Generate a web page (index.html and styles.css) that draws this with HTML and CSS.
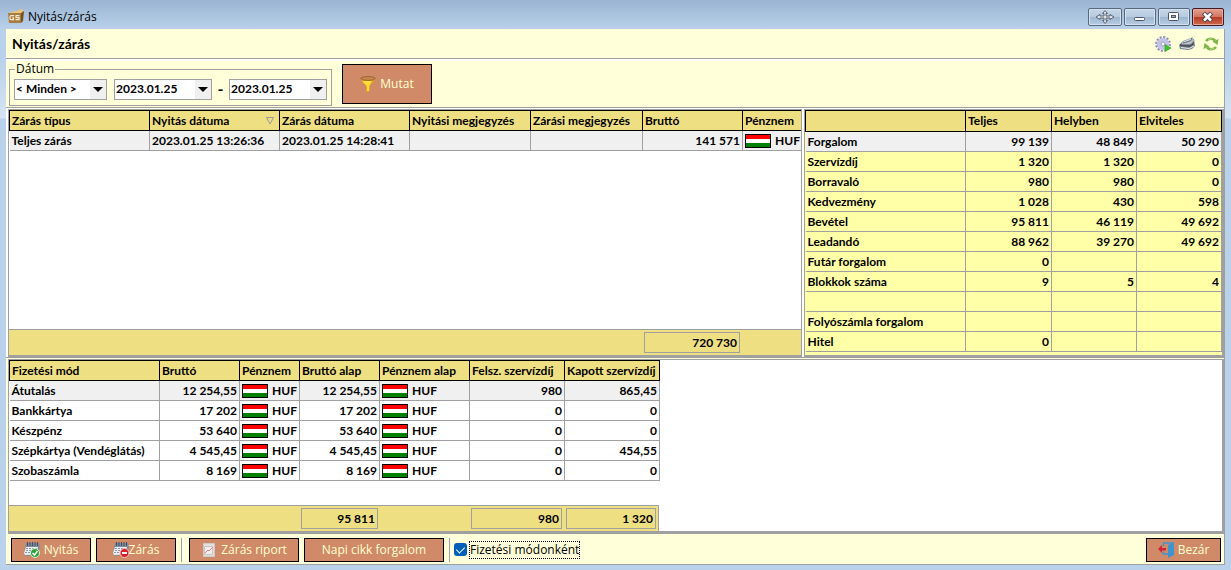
FILE: index.html
```html
<!DOCTYPE html>
<html lang="hu">
<head>
<meta charset="utf-8">
<title>Nyitás/zárás</title>
<link rel="stylesheet" href="styles.css">
</head>
<body>
<svg class="defs" width="0" height="0" aria-hidden="true">
  <symbol id="flag" viewBox="0 0 26 14"><path fill="#000" d="M0 0h26v14H0z"/><path fill="#f00" d="M1 1h24v4H1z"/><path fill="#fff" d="M1 5h24v4H1z"/><path fill="#008000" d="M1 9h24v4H1z"/></symbol>
  <symbol id="calendar" viewBox="0 0 16 16"><path fill="#7f8b9b" d="M2 1h13l1 4-3 8-11 1-2-3z"/><path fill="#eceff4" d="M2 5h12l-2 7.500-11 .5-1-2z"/><path stroke="#3f4f66" stroke-width="1" d="M3.500 0v4M6 0v4M8.500 0v4M11 0v4M13.500 0v4"/><path stroke="#8797ad" stroke-width="1.200" stroke-dasharray="2 1" d="M2 6.500h11M2 8.500h10M1 10.500h10"/></symbol>
</svg>
<div class="window">
  <header class="titlebar">
    <svg class="appicon" viewBox="0 0 16 16"><path fill="#eec477" d="M1 4 15 0v4z"/><path fill="#a97b3e" d="M0 4h13v10H1z"/><path fill="#76501f" d="M13 4l3-2-1 10-2 2z"/><path fill="none" stroke="#f7ead0" stroke-width="1.200" d="M6 6.600H3a1 1 0 0 0-1 1v2a1 1 0 0 0 1 1h2.500V8.800H4.200M11.500 6.600H8v2h3v2H7.500"/></svg>
    <span class="caption">Nyitás/zárás</span>
    <button class="wbtn wide" aria-label="Mozgatás"><svg viewBox="0 0 20 14"><path fill="#dde3ea" stroke="#5c6570" stroke-width="1" d="M10 .5l2.500 3H11V6h4V4.500L19 7l-4 2.500V8h-4v2.500h1.500l-2.500 3-2.500-3H9V8H5v1.500L1 7l4-2.500V6h4V3.500H7.500z"/></svg></button>
    <button class="wbtn" aria-label="Kis méret"><svg viewBox="0 0 20 14"><rect x="4.500" y="7.500" width="10" height="3" rx="1" fill="#fff" stroke="#4d5662"/></svg></button>
    <button class="wbtn" aria-label="Teljes méret"><svg viewBox="0 0 20 14"><rect x="4.500" y="2.500" width="10" height="8" rx="1" fill="#fff" stroke="#4d5662"/><rect x="7.500" y="5.500" width="4" height="2" fill="#9ab" stroke="#4d5662"/></svg></button>
    <button class="wbtn close" aria-label="Bezárás"><svg viewBox="0 0 20 14"><path stroke="#4b4350" stroke-width="4.500" d="M5.500 3l8 8M13.500 3l-8 8"/><path stroke="#fff" stroke-width="2.500" d="M6 3.500l7 7M13 3.500l-7 7"/></svg></button>
  </header>
  <main class="client">
    <div class="heading">
      <h1>Nyitás/zárás</h1>
      <svg viewBox="0 0 16 16"><circle cx="8" cy="8" r="6.700" fill="none" stroke="#8f8fc0" stroke-width="2.400" stroke-dasharray="2.100 1.400"/><circle cx="8" cy="8" r="4" fill="none" stroke="#c3c3e6" stroke-width="4.200"/><circle cx="8" cy="8" r="1.900" fill="#fffff0" stroke="#8888b4" stroke-width=".8"/><path fill="#3cc521" stroke="#2a9a18" stroke-width=".5" d="M10 8.500l6 3.500-6 3.500z"/></svg>
      <svg viewBox="0 0 16 16"><path fill="#7e868e" d="M0 9l4-4 8-3 3 1 1 7-3 3-4 1-8-1z"/><path fill="#b9c2ca" d="M3 6l9-4 3 2-3 4-9 .5z"/><path fill="#474d55" d="M1 8.500l10 .8 4-3v1.600l-4 3-10-.8z"/><path fill="none" stroke="#e4ebf0" stroke-width="1" d="M2 11.500l8 1 5-2.500M5 6l7-2.500"/><path fill="none" stroke="#4c5864" stroke-width=".8" d="M4 7l8-2.500 1-3"/></svg>
      <svg viewBox="0 0 16 16"><path fill="none" stroke="#7fb548" stroke-width="2.600" d="M3 5a6 6 0 0 1 9-.500M13 11a6 6 0 0 1-9 .5"/><path fill="#7fb548" d="M15.500 3l-1 6-5-3.500zM.5 13l1-6 5 3.500z"/><path stroke="#c0dc94" d="M5 3.500l4-1M7 13.500l4-1"/></svg>
    </div>
    <form class="filters">
      <fieldset>
        <legend>Dátum</legend>
        <span class="combo range"><select aria-label="Időszak"><option>&lt; Minden &gt;</option></select></span>
        <span class="combo"><select aria-label="Kezdő dátum"><option>2023.01.25</option></select></span>
        <span class="dash">-</span>
        <span class="combo"><select aria-label="Záró dátum"><option>2023.01.25</option></select></span>
      </fieldset>
      <button type="button" class="btn show"><svg viewBox="0 0 16 16"><path fill="#dfa81a" d="M0 3h16l-6 7v5l-4 1v-6z"/><path fill="#ffdc3c" d="M2 5h10l-3 5v5H7v-5z"/><ellipse cx="8" cy="2.500" rx="7.400" ry="1.900" fill="#c98452" stroke="#96692c"/></svg>Mutat</button>
    </form>
    <div class="upper">
      <section class="pane closings">
        <table class="grid">
          <colgroup><col class="c-type"><col class="c-date"><col class="c-date2"><col class="c-note"><col class="c-note2"><col class="c-sum"><col class="c-cur"></colgroup>
          <thead><tr><th>Zárás típus</th><th><span class="sorted">Nyitás dátuma<svg viewBox="0 0 8 8"><path fill="none" stroke="#999" d="M.5 .5h7l-3.500 6.500z"/></svg></span></th><th>Zárás dátuma</th><th>Nyitási megjegyzés</th><th>Zárási megjegyzés</th><th>Bruttó</th><th>Pénznem</th></tr></thead>
          <tbody><tr class="selected"><td>Teljes zárás</td><td>2023.01.25 13:26:36</td><td>2023.01.25 14:28:41</td><td></td><td></td><td class="num">141 571</td><td class="cur"><svg><use href="#flag"/></svg>HUF</td></tr></tbody>
        </table>
        <div class="totals upper-totals"><output>720 730</output></div>
      </section>
      <section class="pane summary">
        <table class="grid">
          <colgroup><col><col class="s-all"><col class="s-part"><col class="s-part"></colgroup>
          <thead><tr><th></th><th>Teljes</th><th>Helyben</th><th>Elviteles</th></tr></thead>
          <tbody>
            <tr class="selected"><td>Forgalom</td><td>99 139</td><td>48 849</td><td>50 290</td></tr>
            <tr><td>Szervízdíj</td><td>1 320</td><td>1 320</td><td>0</td></tr>
            <tr><td>Borravaló</td><td>980</td><td>980</td><td>0</td></tr>
            <tr><td>Kedvezmény</td><td>1 028</td><td>430</td><td>598</td></tr>
            <tr><td>Bevétel</td><td>95 811</td><td>46 119</td><td>49 692</td></tr>
            <tr><td>Leadandó</td><td>88 962</td><td>39 270</td><td>49 692</td></tr>
            <tr><td>Futár forgalom</td><td>0</td><td></td><td></td></tr>
            <tr><td>Blokkok száma</td><td>9</td><td>5</td><td>4</td></tr>
            <tr><td></td><td></td><td></td><td></td></tr>
            <tr><td>Folyószámla forgalom</td><td></td><td></td><td></td></tr>
            <tr><td>Hitel</td><td>0</td><td></td><td></td></tr>
          </tbody>
        </table>
      </section>
    </div>
    <section class="lower">
      <div class="payments">
        <table class="grid">
          <colgroup><col class="p-name"><col class="p-sum"><col class="p-cur"><col class="p-sum"><col class="p-curb"><col class="p-fee"><col class="p-fee"></colgroup>
          <thead><tr><th>Fizetési mód</th><th>Bruttó</th><th>Pénznem</th><th>Bruttó alap</th><th>Pénznem alap</th><th>Felsz. szervízdíj</th><th>Kapott szervízdíj</th></tr></thead>
          <tbody>
            <tr class="selected"><td>Átutalás</td><td class="num">12 254,55</td><td class="cur"><svg><use href="#flag"/></svg>HUF</td><td class="num">12 254,55</td><td class="cur"><svg><use href="#flag"/></svg>HUF</td><td class="num">980</td><td class="num">865,45</td></tr>
            <tr><td>Bankkártya</td><td class="num">17 202</td><td class="cur"><svg><use href="#flag"/></svg>HUF</td><td class="num">17 202</td><td class="cur"><svg><use href="#flag"/></svg>HUF</td><td class="num">0</td><td class="num">0</td></tr>
            <tr><td>Készpénz</td><td class="num">53 640</td><td class="cur"><svg><use href="#flag"/></svg>HUF</td><td class="num">53 640</td><td class="cur"><svg><use href="#flag"/></svg>HUF</td><td class="num">0</td><td class="num">0</td></tr>
            <tr><td>Szépkártya (Vendéglátás)</td><td class="num">4 545,45</td><td class="cur"><svg><use href="#flag"/></svg>HUF</td><td class="num">4 545,45</td><td class="cur"><svg><use href="#flag"/></svg>HUF</td><td class="num">0</td><td class="num">454,55</td></tr>
            <tr><td>Szobaszámla</td><td class="num">8 169</td><td class="cur"><svg><use href="#flag"/></svg>HUF</td><td class="num">8 169</td><td class="cur"><svg><use href="#flag"/></svg>HUF</td><td class="num">0</td><td class="num">0</td></tr>
          </tbody>
        </table>
        <div class="totals lower-totals"><output class="t-base">95 811</output><output class="t-fee">980</output><output class="t-fee2">1 320</output></div>
      </div>
    </section>
    <footer class="actions">
      <button class="btn b-open"><svg viewBox="0 0 16 16"><use href="#calendar"/><circle cx="11" cy="11" r="4.500" fill="#2fa33a" stroke="#d8f0d8"/><path fill="none" stroke="#fff" stroke-width="1.500" d="M8.500 11l2 2 3-4"/></svg>Nyitás</button>
      <button class="btn b-close"><svg viewBox="0 0 16 16"><use href="#calendar"/><circle cx="11.500" cy="11" r="4.500" fill="#d8202a" stroke="#f4c4c4"/><path stroke="#fff" stroke-width="2" d="M9 11h5"/></svg>Zárás</button>
      <span class="sep"></span>
      <button class="btn b-report"><svg viewBox="0 0 16 16"><path fill="#e3e1e0" stroke="#cfcac8" d="M2.500 1.500h11v13h-11z"/><path fill="#f1efee" stroke="#c9c4c2" d="M3.500 4.500h8v8h-8z"/><path fill="none" stroke="#e08080" d="M4 11l3-3 1 1 4-4"/></svg>Zárás riport</button>
      <button class="btn b-daily">Napi cikk forgalom</button>
      <span class="sep"></span>
      <label class="check"><input type="checkbox" checked><span>Fizetési módonként</span></label>
      <button class="btn b-exit"><svg viewBox="0 0 16 16"><path fill="none" stroke="#3f94cf" stroke-width="1.500" d="M5.500 4V1H15v11H5.500V9.500"/><path fill="#3f94cf" d="M10 3l6-3v13l-6 3z"/><path fill="#d0263c" d="M0 7l4-4v3h4v2.500H4V11z"/></svg>Bezár</button>
    </footer>
  </main>
</div>
</body>
</html>
```

FILE: styles.css
```css
* { box-sizing: border-box; }
html, body { height: 100%; }
body { margin: 0; font: 12px/16px "Open Sans", "Noto Sans", sans-serif; color: #000; }
.defs { position: absolute; }
button, select, input { font: inherit; }
.window {
  min-height: 100%; display: flex; flex-direction: column; padding: 0 6px 5px;
  background: linear-gradient(#9ab4d1, #b9d1ea 29px, #b9d1ea 60px, #d5e4f3 118px, #b9d1ea 119px);
}
.titlebar { display: flex; align-items: center; gap: 2px; height: 29px; padding: 5px 1px 0 2px; }
.titlebar .appicon { width: 16px; height: 16px; margin-right: 2px; }
.caption { flex: 1; }
.wbtn { width: 32px; height: 18px; padding: 0; border: 1px solid #57697f; border-radius: 2px; background: linear-gradient(#c5d6e8, #b6cadf 50%, #9db6d0 50%, #b7cde3); box-shadow: inset 0 0 0 1px #d4e2f0; display: flex; align-items: center; justify-content: center; }
.wbtn.wide { width: 34px; }
.wbtn svg { width: 20px; height: 14px; }
.wbtn.close { border-color: #43192a; background: linear-gradient(#e3a18f, #cf7460 50%, #b43a25 50%, #cd6a4c); box-shadow: inset 0 0 0 1px #e7a795; }
.client { flex: 1; display: flex; flex-direction: column; background: #ffffd9; border-right: 1px solid #a0a0a0; border-bottom: 1px solid #a0a0a0; }
.heading { display: flex; align-items: center; gap: 8px; height: 30px; padding: 0 5px 0 6px; border-bottom: 1px solid #a0a0a0; }
.heading h1 { flex: 1; margin: 0; font: bold 14px/16px Lato, sans-serif; }
.heading svg { width: 16px; height: 16px; }
.filters { display: flex; gap: 10px; height: 49px; padding: 3px 3px 2px; border-top: 2px solid #fff; border-bottom: 1px solid #a0a0a0; }
fieldset { display: flex; align-items: center; margin: 0; padding: 0 4px 1px; width: 323px; border: 1px solid #a0a0a0; min-width: 0; height: 42px; }
legend { padding: 0 1px; margin-left: 1px; line-height: 10px; }
.combo { position: relative; width: 98px; height: 21px; }
.combo.range { width: 93px; margin-right: 7px; }
.combo::after { content: ""; position: absolute; right: 4px; top: 8px; border: 5px solid transparent; border-top-color: #000; border-bottom: 0; pointer-events: none; }
.combo select { appearance: none; width: 100%; height: 21px; padding: 0 0 1px 1px; border: 1px solid #a0a0a0; border-radius: 0; background: linear-gradient(#f0f0f0, #f0f0f0) right / 16px 100% no-repeat #fff; font: bold 12px/16px Lato, sans-serif; color: #000; }
.dash { width: 17px; text-align: center; font: bold 16px/16px Lato, sans-serif; }
.btn { display: flex; align-items: center; justify-content: center; gap: 4px; padding: 0; border: 1px solid #000; background: #d08a68; color: #ffffd0; }
.btn svg { width: 16px; height: 16px; }
.show { width: 90px; height: 40px; }
.upper { display: grid; grid-template-columns: 794px 1fr; gap: 2px; height: 250px; padding: 1px 0 0 2px; background: #fff; border-bottom: 1px solid #a0a0a0; }
.pane { display: flex; flex-direction: column; border: 1px solid #a0a0a0; border-bottom-width: 2px; background: #fff; overflow: hidden; }
.grid { border-collapse: collapse; table-layout: fixed; font: bold 12px/16px Lato, sans-serif; }
.grid th, .grid td { height: 20px; padding: 0 2px; border: 1px solid #a0a0a0; text-align: left; white-space: nowrap; overflow: hidden; }
.grid th { border-color: #000; background: #eedf82; }
.grid td:first-child { border-left: 0; }
.grid .selected td { background: #f0f0f0; border-top-color: #000; }
.grid .num, .summary td + td { text-align: right; }
.grid .cur { padding-right: 0; }
.cur svg { width: 26px; height: 14px; margin-right: 4px; vertical-align: -3px; }
.closings .grid { width: 793px; }
.c-type { width: 140px; } .c-date, .c-date2 { width: 130px; } .c-note { width: 121px; } .c-note2 { width: 112px; } .c-sum { width: 100px; }
.sorted { display: flex; align-items: center; justify-content: space-between; padding-right: 3px; }
.sorted svg { width: 8px; height: 8px; }
.totals { display: flex; align-items: center; margin-top: auto; height: 26px; background: #eedf82; border-top: 1px solid #a0a0a0; font: bold 12px/16px Lato, sans-serif; }
.totals output { height: 21px; padding: 2px; border: 1px solid #a0a0a0; text-align: right; }
.upper-totals output { width: 96px; margin-left: 635px; }
.summary { border-right: 2px solid #a0a0a0; background: #ffffa8; }
.summary .grid { width: 100%; }
.summary .grid th { height: 21px; }
.summary td { background: #ffffa8; }
.s-all { width: 86px; } .s-part { width: 85px; }
.lower { flex: 1; display: flex; margin: 1px 0 0 2px; border: 1px solid #a0a0a0; border-right-width: 2px; border-bottom-width: 3px; background: #fff; }
.payments { width: 650px; display: flex; flex-direction: column; }
.p-name { width: 150px; } .p-sum { width: 80px; } .p-cur { width: 60px; } .p-curb { width: 90px; } .p-fee { width: 95px; }
.payments .grid { width: 100%; }
.lower-totals { border-right: 1px solid #a0a0a0; }
.t-base { width: 77px; margin-left: 292px; } .t-fee { width: 91px; margin-left: 93px; } .t-fee2 { width: 90px; margin-left: 4px; }
.actions { display: flex; align-items: center; gap: 5px; height: 30px; padding: 1px 3px 0 5px; }
.actions .btn { height: 24px; }
.b-open, .b-close { width: 80px; }
.actions .b-close { gap: 0; }
.b-report { width: 110px; } .b-daily { width: 140px; }
.sep { width: 3px; height: 24px; border-left: 1px solid #a0a0a0; border-right: 1px solid #fff; }
.check { display: flex; align-items: center; gap: 3px; margin-left: -3px; }
.check input { appearance: none; width: 13px; height: 13px; margin: 0; border-radius: 3px; background: #005fb8; position: relative; }
.check input:checked::after { content: ""; position: absolute; left: 4px; top: 2px; width: 4px; height: 7px; border: solid #fff; border-width: 0 1px 1px 0; transform: rotate(45deg); }
.check span { outline: 1px dotted #000; }
.b-exit { width: 75px; margin-left: auto; }
```
